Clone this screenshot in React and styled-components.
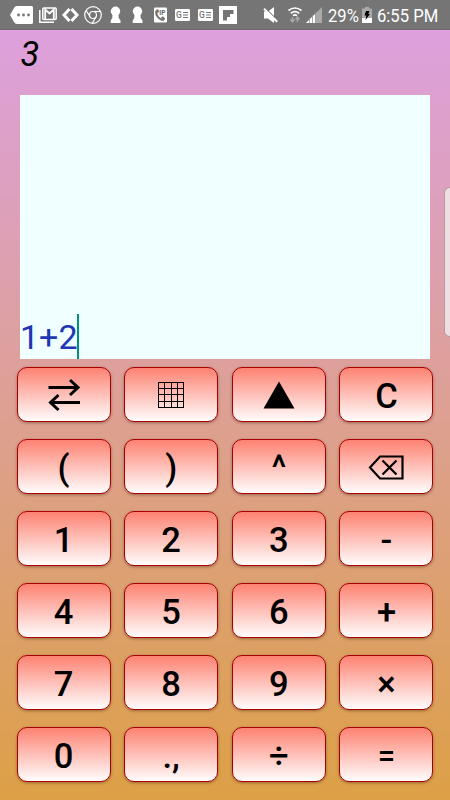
import React from 'react'
import styled, { createGlobalStyle } from 'styled-components'

const GlobalStyle = createGlobalStyle`
  * {
    box-sizing: border-box;
  }
  body {
    margin: 0;
    overflow: hidden;
    font-family: Roboto, 'Liberation Sans', sans-serif;
  }
`

const Screen = styled.div`
  position: relative;
  width: 450px;
  height: 800px;
  display: flex;
  flex-direction: column;
  overflow: hidden;
  background: linear-gradient(#dda0dd 30px, #dda046 100%);
`

const StatusBar = styled.header`
  flex: none;
  display: flex;
  align-items: center;
  height: 30px;
  background: #757575;
  border-bottom: 1px solid #74656f;
  color: #fff;
`

const StatusIcon = styled.svg`
  flex: none;
  display: block;
  height: 30px;
  width: ${(p) => p.$w}px;
  margin-left: ${(p) => p.$gap}px;
`

const StatusText = styled.span`
  flex: none;
  width: ${(p) => p.$w}px;
  margin-left: ${(p) => p.$gap}px;
  padding-top: 2px;
  font-size: 19px;
  line-height: 28px;
  white-space: nowrap;
  transform: scaleX(0.875);
  transform-origin: left center;
`

const Result = styled.div`
  flex: none;
  height: 65px;
  padding: 4px 20.5px 0;
  font-size: 34.5px;
  font-style: italic;
  line-height: 40px;
  color: #000;
`

const Editor = styled.div`
  flex: none;
  display: flex;
  align-items: flex-end;
  height: 264px;
  margin: 0 20px;
  background: #f0ffff;
`

const Expression = styled.span`
  font-size: 34px;
  line-height: 44px;
  color: #2136b3;
`

const Caret = styled.span`
  width: 2px;
  height: 45px;
  margin-left: -0.5px;
  background: #009080;
`

const Keypad = styled.main`
  display: grid;
  grid-template-columns: repeat(4, 94px);
  grid-auto-rows: 55px;
  justify-content: space-between;
  row-gap: 17px;
  padding: 8px 16.5px 0;
`

const Key = styled.button`
  display: flex;
  align-items: center;
  justify-content: center;
  padding: 3px 0 0;
  border: 1px solid #a80000;
  border-radius: 10px;
  background: linear-gradient(#fd8070, #fff) border-box;
  box-shadow: 0 1px 3px rgba(60, 30, 20, 0.45);
  font-family: inherit;
  font-size: ${(p) => (p.$small ? 31 : 34.5)}px;
  font-weight: 500;
  line-height: 40px;
  color: #000;
`

const KeyIcon = styled.svg`
  display: block;
  margin-top: -2px;
`

const EdgeHandle = styled.div`
  position: absolute;
  top: 187px;
  right: -6px;
  width: 12px;
  height: 150px;
  border: 1px solid #b39b9f;
  border-radius: 6px;
  background: #f0dfe2;
`

const Keyhole = ({ gap }) => (
  <StatusIcon $w={11} $gap={gap} viewBox="0 0 11 30" fill="#fff">
    <circle cx="5.5" cy="11.2" r="4.7" />
    <path d="M2.600 13h5.800l.3 5 1.800 2.500V23H.7v-2.500L2.300 18z" />
  </StatusIcon>
)

const NewsCard = ({ gap }) => (
  <StatusIcon $w={15} $gap={gap} viewBox="0 0 15 30">
    <rect y="9" width="15" height="12" rx="1.2" fill="#fff" />
    <text x="1" y="18.3" fontSize="8.5" fontWeight="500" fill="#777">G</text>
    <path d="M8 12.5h5M8 15h5M8 17.5h5" stroke="#777" strokeWidth="1" />
  </StatusIcon>
)

const SwapIcon = () => (
  <KeyIcon width="34" height="34" viewBox="0 0 34 34" fill="none" stroke="#000" strokeWidth="3">
    <path d="M1.500 9.500H31M23 2l8 7.500-8 7.500M33 24.500H3M11.500 17L3.500 24.500l8 7.500" />
  </KeyIcon>
)

const GridIcon = () => (
  <KeyIcon width="28" height="28" viewBox="0 0 28 28" fill="none" stroke="#000">
    <path d="M1 1.500h26M1 7.500h26M1 13.500h26M1 20.500h26M1 26.500h26" />
    <path d="M1.500 1v26M7.500 1v26M14.500 1v26M20.500 1v26M26.500 1v26" />
  </KeyIcon>
)

const UpIcon = () => (
  <KeyIcon width="32" height="28" viewBox="0 0 32 28">
    <path d="M16 .5L31.500 27.500H.5z" />
  </KeyIcon>
)

const BackspaceIcon = () => (
  <KeyIcon width="36" height="28" viewBox="0 0 36 28" fill="none" stroke="#000" strokeWidth="2.2">
    <path d="M12 3.500h22.500v22H12L2 14.500z" />
    <path d="M14.500 7.500l14 14M28.500 7.500l-14 14" />
  </KeyIcon>
)

const keys = [
  <SwapIcon />, <GridIcon />, <UpIcon />, 'C',
  '(', ')', '^', <BackspaceIcon />,
  '1', '2', '3', '-',
  '4', '5', '6', '+',
  '7', '8', '9', '×',
  '0', '.,', '÷', '=',
]

const Status = () => (
  <StatusBar>
    <StatusIcon $w={23} $gap={10} viewBox="0 0 23 30">
      <path d="M7 6h14.500q1.500 0 1.500 1.500v15q0 1.500-1.500 1.500H7q-2 0-3-2L0 15l4-7q1-2 3-2z" fill="#fff" />
      <g fill="#757575">
        <circle cx="8.500" cy="15" r="1.4" />
        <circle cx="13.500" cy="15" r="1.4" />
        <circle cx="18.500" cy="15" r="1.4" />
      </g>
    </StatusIcon>
    {/* mail */}
    <StatusIcon $w={18} $gap={6} viewBox="0 0 18 30" fill="none" stroke="#fff">
      <path d="M.8 10v12.200H15" strokeWidth="1.500" />
      <rect x="3.800" y="8" width="13.400" height="11.500" rx="1" strokeWidth="1.500" />
      <path d="M6.200 19V9.500l4.300 4 4.300-4V19" strokeWidth="1.800" />
    </StatusIcon>
    <StatusIcon $w={17} $gap={5} viewBox="0 0 17 30" fill="none" stroke="#fff" strokeWidth="3">
      <path d="M7.500 9L2 15l5.500 6M9.500 9l5.500 6-5.500 6" />
    </StatusIcon>
    {/* browser */}
    <StatusIcon $w={18} $gap={5} viewBox="0 0 18 30" fill="none" stroke="#fff" strokeWidth="1.2">
      <circle cx="9" cy="15" r="8.300" />
      <circle cx="9" cy="15" r="3.500" />
      <path d="M9 11.500h7.500M6 16.700L2.200 10.500M12 16.700l-3.800 6.500" />
    </StatusIcon>
    <Keyhole gap={8} />
    <Keyhole gap={11} />
    {/* call */}
    <StatusIcon $w={13} $gap={11} viewBox="0 0 13 30">
      <rect y="7.500" width="13" height="15" rx="1.200" fill="#fff" />
      <path d="M2.700 10.500c-2 4 2.500 9.500 7 9.500" fill="none" stroke="#757575" strokeWidth="2" />
      <path d="M2 10l2-1 1.300 3-1.800 1zM7 17.500l1.800-1.200 2.500 2.200-1.500 2z" fill="#757575" />
      <text x="5.300" y="14.700" fontSize="6.500" fontWeight="700" fill="#666">IP</text>
    </StatusIcon>
    <NewsCard gap={8} />
    <NewsCard gap={8} />
    <StatusIcon $w={18} $gap={6} viewBox="0 0 18 30">
      <rect y="6" width="18" height="18" fill="#fff" />
      <path d="M4 10h10.500v4H11v3H8v3.500H4z" fill="#757575" />
    </StatusIcon>
    {/* muted speaker */}
    <StatusIcon $w={15} $gap={26} viewBox="0 0 15 30" fill="#fff">
      <path d="M1 11.500h4l6-4.500v16L5 18.500H1z" />
      <path d="M2.500 8.500l12 12" stroke="#757575" strokeWidth="1.500" />
      <path d="M1 8.800l13.200 13" stroke="#fff" strokeWidth="2" />
    </StatusIcon>
    <StatusIcon $w={14} $gap={10} viewBox="0 0 14 30" fill="none" stroke="#fff">
      <path d="M.5 10.500q6.500-5 13 0M2.800 13.300q4.200-3.400 8.400 0M5 15.600q2-1.500 4 0" strokeWidth="1.600" />
      <path d="M4.500 17v5M2.500 19.500l2 2.500 2-2.500M9.500 22v-5M7.500 19.500l2-2.500 2 2.500" stroke="#aaa" strokeWidth="1.400" />
    </StatusIcon>
    <StatusIcon $w={16} $gap={4} viewBox="0 0 16 30">
      <path d="M0 23L16 7v16z" fill="#aaa" />
      <path d="M0 23l9.500-9.500V23z" fill="#fff" />
      <path d="M3.500 18v5M6.500 15v8M9.500 12v11" stroke="#888" strokeWidth=".7" />
    </StatusIcon>
    <StatusText $w={30} $gap={6}>29%</StatusText>
    <StatusIcon $w={10} $gap={4} viewBox="0 0 10 30">
      <path d="M3 7h4v1.500h3V23H0V8.500h3z" fill="#aaa" />
      <path d="M0 18h10v5H0z" fill="#fff" />
      <path d="M4 11h3.500L6.300 14H8l-4.500 6 .8-4.500H2.500z" fill="#000" />
    </StatusIcon>
    <StatusText $w={61} $gap={4.5}>6:55 PM</StatusText>
  </StatusBar>
)

const App = () => (
  <>
    <GlobalStyle />
    <Screen>
      <Status />
      <Result>3</Result>
      <Editor>
        <Expression>1+2</Expression>
        <Caret />
      </Editor>
      <Keypad>
        {keys.map((label, i) => (
          <Key key={i} $small={label === '='}>
            {label}
          </Key>
        ))}
      </Keypad>
      <EdgeHandle />
    </Screen>
  </>
)

export default App
